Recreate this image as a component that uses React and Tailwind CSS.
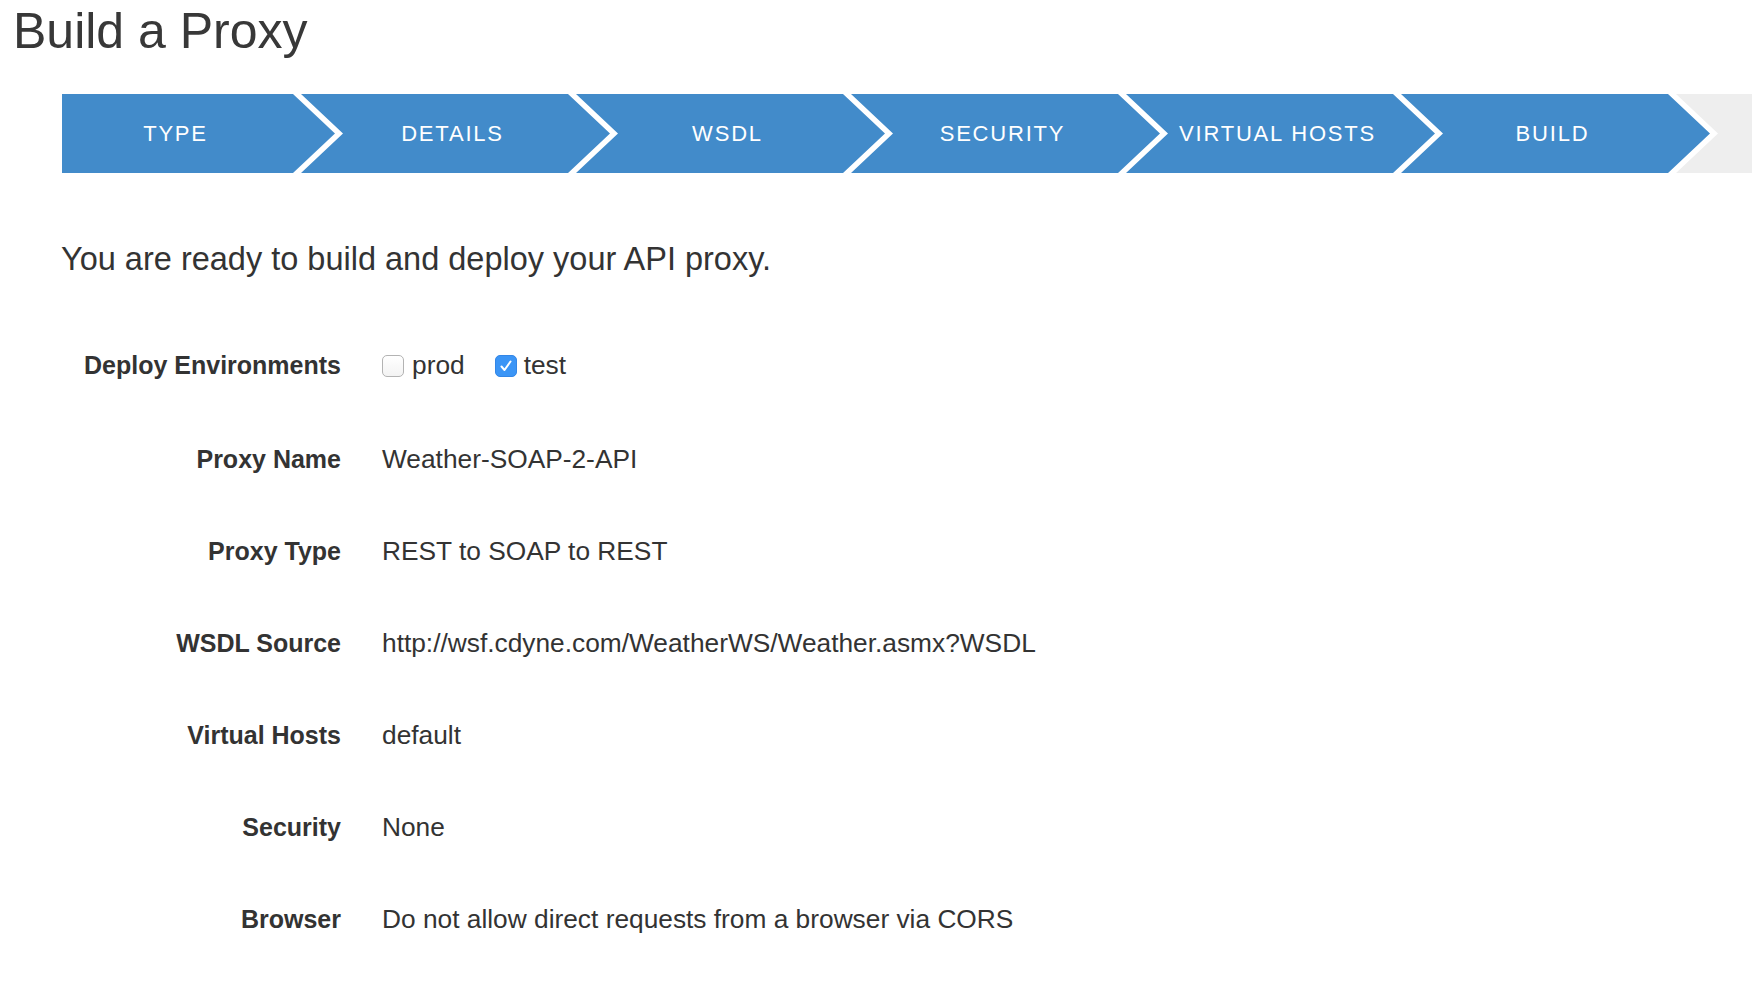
import React from 'react';

const steps = ['TYPE', 'DETAILS', 'WSDL', 'SECURITY', 'VIRTUAL HOSTS', 'BUILD'];

const summary = [
    { label: 'Proxy Name', value: 'Weather-SOAP-2-API' },
    { label: 'Proxy Type', value: 'REST to SOAP to REST' },
    { label: 'WSDL Source', value: 'http://wsf.cdyne.com/WeatherWS/Weather.asmx?WSDL' },
    { label: 'Virtual Hosts', value: 'default' },
    { label: 'Security', value: 'None' },
    { label: 'Browser', value: 'Do not allow direct requests from a browser via CORS' },
];

const Checkbox = ({ checked }) => {
    if (checked) {
        return (
            <span className="w-[22px] h-[22px] rounded-[5px] bg-[#3b95f6] border border-[#3386e6] flex items-center justify-center">
                <svg width="14" height="14" viewBox="0 0 14 14">
                    <polyline points="2.5,7.5 5.5,11 11.5,2.5" fill="none" stroke="white" strokeWidth="2" strokeLinecap="round" strokeLinejoin="round" />
                </svg>
            </span>
        );
    }
    return (
        <span className="w-[22px] h-[22px] rounded-[5px] border border-[#b3b3b3] bg-gradient-to-b from-white to-[#f3f3f3]" />
    );
};

const App = () => {
    return (
        <div className="min-h-screen bg-white text-[#333] font-['Liberation_Sans',Arial,sans-serif]">
            <h1 className="pl-[13px] pt-[6px] text-[50px] leading-none font-normal text-[#383838]">
                Build a Proxy
            </h1>

            {/* wizard steps */}
            <div className="flex h-[79px] ml-[62px] mt-[38px] overflow-hidden">
                {steps.map((step, index) => (
                    <div
                        key={step}
                        className={index === 0
                            ? 'shrink-0 w-[273px] pr-[46px] flex items-center justify-center bg-[#428bca] text-white text-[22px] tracking-[1.8px] [clip-path:polygon(0_0,calc(100%_-_42px)_0,100%_50%,calc(100%_-_42px)_100%,0_100%)]'
                            : 'shrink-0 w-[309px] -ml-[34px] pr-[6px] flex items-center justify-center bg-[#428bca] text-white text-[22px] tracking-[1.8px] [clip-path:polygon(0_0,calc(100%_-_42px)_0,100%_50%,calc(100%_-_42px)_100%,0_100%,42px_50%)]'}
                    >
                        {step}
                    </div>
                ))}
                <div className="flex-1 min-w-0 -ml-[34px] bg-[#eeeeee] [clip-path:polygon(0_0,100%_0,100%_100%,0_100%,42px_50%)]" />
            </div>

            <p className="ml-[61px] mt-[70px] text-[32.5px] leading-none">
                You are ready to build and deploy your API proxy.
            </p>

            <div className="mt-[43px] grid grid-cols-[341px_auto] gap-x-[41px]">
                <div className="h-[95px] flex items-center justify-end text-[25px] font-bold">
                    Deploy Environments
                </div>
                <div className="h-[95px] flex items-center text-[26.3px]">
                    <label className="flex items-center gap-[8px]">
                        <Checkbox checked={false} />
                        <span>prod</span>
                    </label>
                    <label className="flex items-center gap-[7px] ml-[30px]">
                        <Checkbox checked={true} />
                        <span>test</span>
                    </label>
                </div>
                {summary.map((row) => (
                    <React.Fragment key={row.label}>
                        <div className="h-[92px] flex items-center justify-end text-[25px] font-bold">
                            {row.label}
                        </div>
                        <div className="h-[92px] flex items-center text-[26.3px]">
                            {row.value}
                        </div>
                    </React.Fragment>
                ))}
            </div>
        </div>
    );
};

export default App;
